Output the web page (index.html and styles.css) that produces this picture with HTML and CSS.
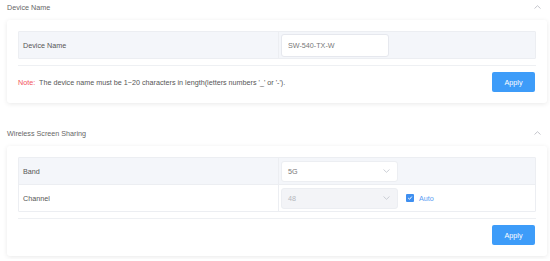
FILE: index.html
```html
<!DOCTYPE html>
<html>

<head>
    <title>Device Settings</title>
    <link rel="stylesheet" href="styles.css">
</head>

<body>
    <div class="section">
        <div class="section-head">
            <span>Device Name</span>
            <svg class="caret" width="7" height="4" viewBox="0 0 7 4"><path d="M0.5 3.5 L3.5 0.7 L6.5 3.5" fill="none" stroke="#b5b8bf" stroke-width="0.8"/></svg>
        </div>
        <div class="card">
            <div class="table">
                <div class="row shaded">
                    <div class="label">Device Name</div>
                    <div class="value">
                        <input class="text-input" type="text" value="SW-540-TX-W">
                    </div>
                </div>
            </div>
            <div class="footer">
                <p class="note"><span class="note-tag">Note:</span> The device name must be 1~20 characters in length(letters numbers '_' or '-').</p>
                <button class="apply">Apply</button>
            </div>
        </div>
    </div>

    <div class="section">
        <div class="section-head">
            <span>Wireless Screen Sharing</span>
            <svg class="caret" width="7" height="4" viewBox="0 0 7 4"><path d="M0.5 3.5 L3.5 0.7 L6.5 3.5" fill="none" stroke="#b5b8bf" stroke-width="0.8"/></svg>
        </div>
        <div class="card">
            <div class="table">
                <div class="row shaded">
                    <div class="label">Band</div>
                    <div class="value">
                        <div class="select">
                            <span>5G</span>
                            <svg width="7" height="4" viewBox="0 0 7 4"><path d="M0.5 0.5 L3.5 3.3 L6.5 0.5" fill="none" stroke="#c0c4cc" stroke-width="0.8"/></svg>
                        </div>
                    </div>
                </div>
                <div class="row">
                    <div class="label">Channel</div>
                    <div class="value">
                        <div class="select disabled">
                            <span>48</span>
                            <svg width="7" height="4" viewBox="0 0 7 4"><path d="M0.5 0.5 L3.5 3.3 L6.5 0.5" fill="none" stroke="#c0c4cc" stroke-width="0.8"/></svg>
                        </div>
                        <label class="check"><span class="box"><svg width="6" height="6" viewBox="0 0 6 6"><path d="M1.2 3 L2.5 4.3 L4.8 1.6" fill="none" stroke="#fff" stroke-width="1"/></svg></span>Auto</label>
                    </div>
                </div>
            </div>
            <div class="footer">
                <p class="note"></p>
                <button class="apply">Apply</button>
            </div>
        </div>
    </div>
</body>

</html>
```

FILE: styles.css
```css
body {
    margin: 0;
    padding: 0 3px 0 7px;
    background-color: #fff;
    color: #444;
    font-family: "Liberation Sans", Arial, sans-serif;
    font-size: 7.2px;
}

.section-head {
    display: flex;
    justify-content: space-between;
    align-items: center;
    height: 14px;
    margin-bottom: 6px;
    color: #666;
}

.caret {
    margin-right: 6px;
    margin-top: -1px;
}

.card {
    padding: 11px;
    margin-bottom: 23px;
    border-radius: 3px;
    background-color: #fff;
    box-shadow: 0 1px 5px rgba(0, 0, 0, 0.09);
}

.section:last-child .card {
    margin-bottom: 3px;
}

.table {
    border: 1px solid #eceef2;
    border-radius: 1px;
}

.row {
    display: flex;
    height: 26px;
    border-top: 1px solid #eceef2;
}

.row:first-child {
    border-top: none;
}

.row.shaded {
    background-color: #f4f6fa;
}

.label {
    width: 255px;
    padding-left: 4px;
    display: flex;
    align-items: center;
    border-right: 1px solid #eceef2;
    color: #555;
}

.value {
    flex: 1;
    padding-left: 2px;
    display: flex;
    align-items: center;
}

.text-input {
    width: 108px;
    height: 23px;
    box-sizing: border-box;
    padding: 0 6px;
    border: 1px solid #e6e8ee;
    border-radius: 3px;
    background-color: #fff;
    font-family: inherit;
    font-size: 7.2px;
    color: #777;
    outline: none;
}

.select {
    width: 117px;
    height: 21px;
    box-sizing: border-box;
    padding: 0 7px 0 6px;
    display: flex;
    justify-content: space-between;
    align-items: center;
    border: 1px solid #eceef2;
    border-radius: 3px;
    background-color: #fff;
    color: #777;
}

.select.disabled {
    background-color: #f3f4f7;
    color: #b4b7bd;
}

.check {
    display: flex;
    align-items: center;
    margin-left: 8px;
    color: #5a9cf3;
}

.box {
    width: 8px;
    height: 8px;
    margin-right: 5px;
    border-radius: 1px;
    background-color: #3f8ff0;
    display: flex;
    align-items: center;
    justify-content: center;
}

.footer {
    margin-top: 6px;
    padding-top: 6px;
    border-top: 1px solid #eef0f3;
    display: flex;
    justify-content: space-between;
    align-items: center;
}

.note {
    margin: 0;
    color: #555;
}

.note-tag {
    color: #f2545b;
    margin-right: 2px;
}

.apply {
    width: 43px;
    height: 20px;
    margin-right: 1px;
    border: none;
    border-radius: 2px;
    background-color: #3d9cf9;
    color: #fff;
    font-family: inherit;
    font-size: 7.2px;
    cursor: pointer;
}
```
